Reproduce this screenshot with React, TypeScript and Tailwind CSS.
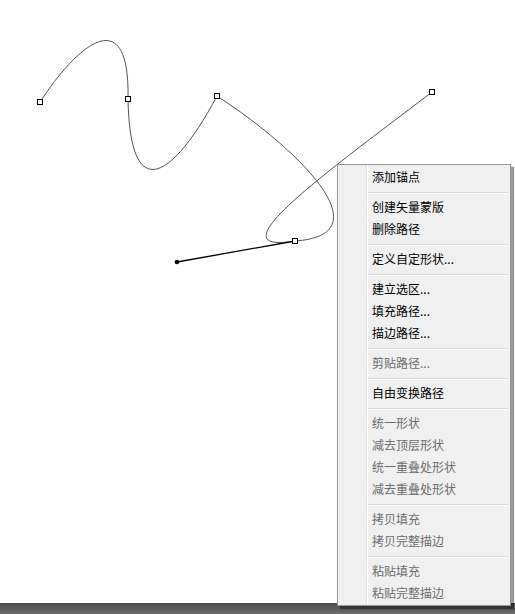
import React from "react";

type Item = { label: string; disabled?: boolean } | "sep";

const items: Item[] = [
  { label: "添加锚点" },
  "sep",
  { label: "创建矢量蒙版" },
  { label: "删除路径" },
  "sep",
  { label: "定义自定形状..." },
  "sep",
  { label: "建立选区..." },
  { label: "填充路径..." },
  { label: "描边路径..." },
  "sep",
  { label: "剪贴路径...", disabled: true },
  "sep",
  { label: "自由变换路径" },
  "sep",
  { label: "统一形状", disabled: true },
  { label: "减去顶层形状", disabled: true },
  { label: "统一重叠处形状", disabled: true },
  { label: "减去重叠处形状", disabled: true },
  "sep",
  { label: "拷贝填充", disabled: true },
  { label: "拷贝完整描边", disabled: true },
  "sep",
  { label: "粘贴填充", disabled: true },
  { label: "粘贴完整描边", disabled: true },
];

function Anchor({ x, y }: { x: number; y: number }) {
  return <rect x={x - 2.5} y={y - 2.5} width={5} height={5} fill="#fff" stroke="#000" strokeWidth={1} />;
}

export default function App() {
  return (
    <div className="w-[515px] h-[614px] flex flex-col bg-white overflow-hidden" style={{ fontFamily: '"Noto Sans CJK SC", "Noto Sans", sans-serif' }}>
      <div className="relative flex-1 bg-white">
        <svg width="515" height="603" viewBox="0 0 515 603" className="block">
          <path
            d="M40,102 C82,38 130,5 128,99 C130,210 175,175 217,96 C300,150 385,235 295,241 C210,255 330,170 432,92"
            fill="none"
            stroke="#555"
            strokeWidth={1}
          />
          <line x1={177} y1={262} x2={295} y2={241} stroke="#000" strokeWidth={1.3} />
          <circle cx={177} cy={262} r={2.3} fill="#000" />
          <Anchor x={40} y={102} />
          <Anchor x={128} y={99} />
          <Anchor x={217} y={96} />
          <Anchor x={432} y={92} />
          <Anchor x={295} y={241} />
        </svg>

        <div className="absolute left-[337px] top-[164px] w-[174px] border border-[#979797] bg-[#f0f0f0] shadow-[3px_3px_1px_rgba(0,0,0,0.4)] flex">
          <div className="w-[28px] shrink-0" />
          <div className="w-[1px] bg-[#e2e3e3]" />
          <div className="w-[1px] bg-white" />
          <div className="flex-1 flex flex-col py-[1px] pr-[2px]">
            {items.map((it, i) =>
              it === "sep" ? (
                <div key={i} className="h-[8px] pt-[4px]">
                  <div className="h-[1px] bg-[#d7d7d7]" />
                  <div className="h-[1px] bg-white" />
                </div>
              ) : (
                <div
                  key={i}
                  className={`h-[22px] flex items-center pl-[4px] text-[12px] leading-none whitespace-nowrap ${
                    it.disabled ? "text-[#6d6d6d]" : "text-black"
                  }`}
                >
                  {it.label}
                </div>
              )
            )}
          </div>
        </div>
      </div>
      <div className="h-[11px] shrink-0 bg-linear-to-b from-[#4a4a4a] to-[#6c6c6c]" />
    </div>
  );
}
